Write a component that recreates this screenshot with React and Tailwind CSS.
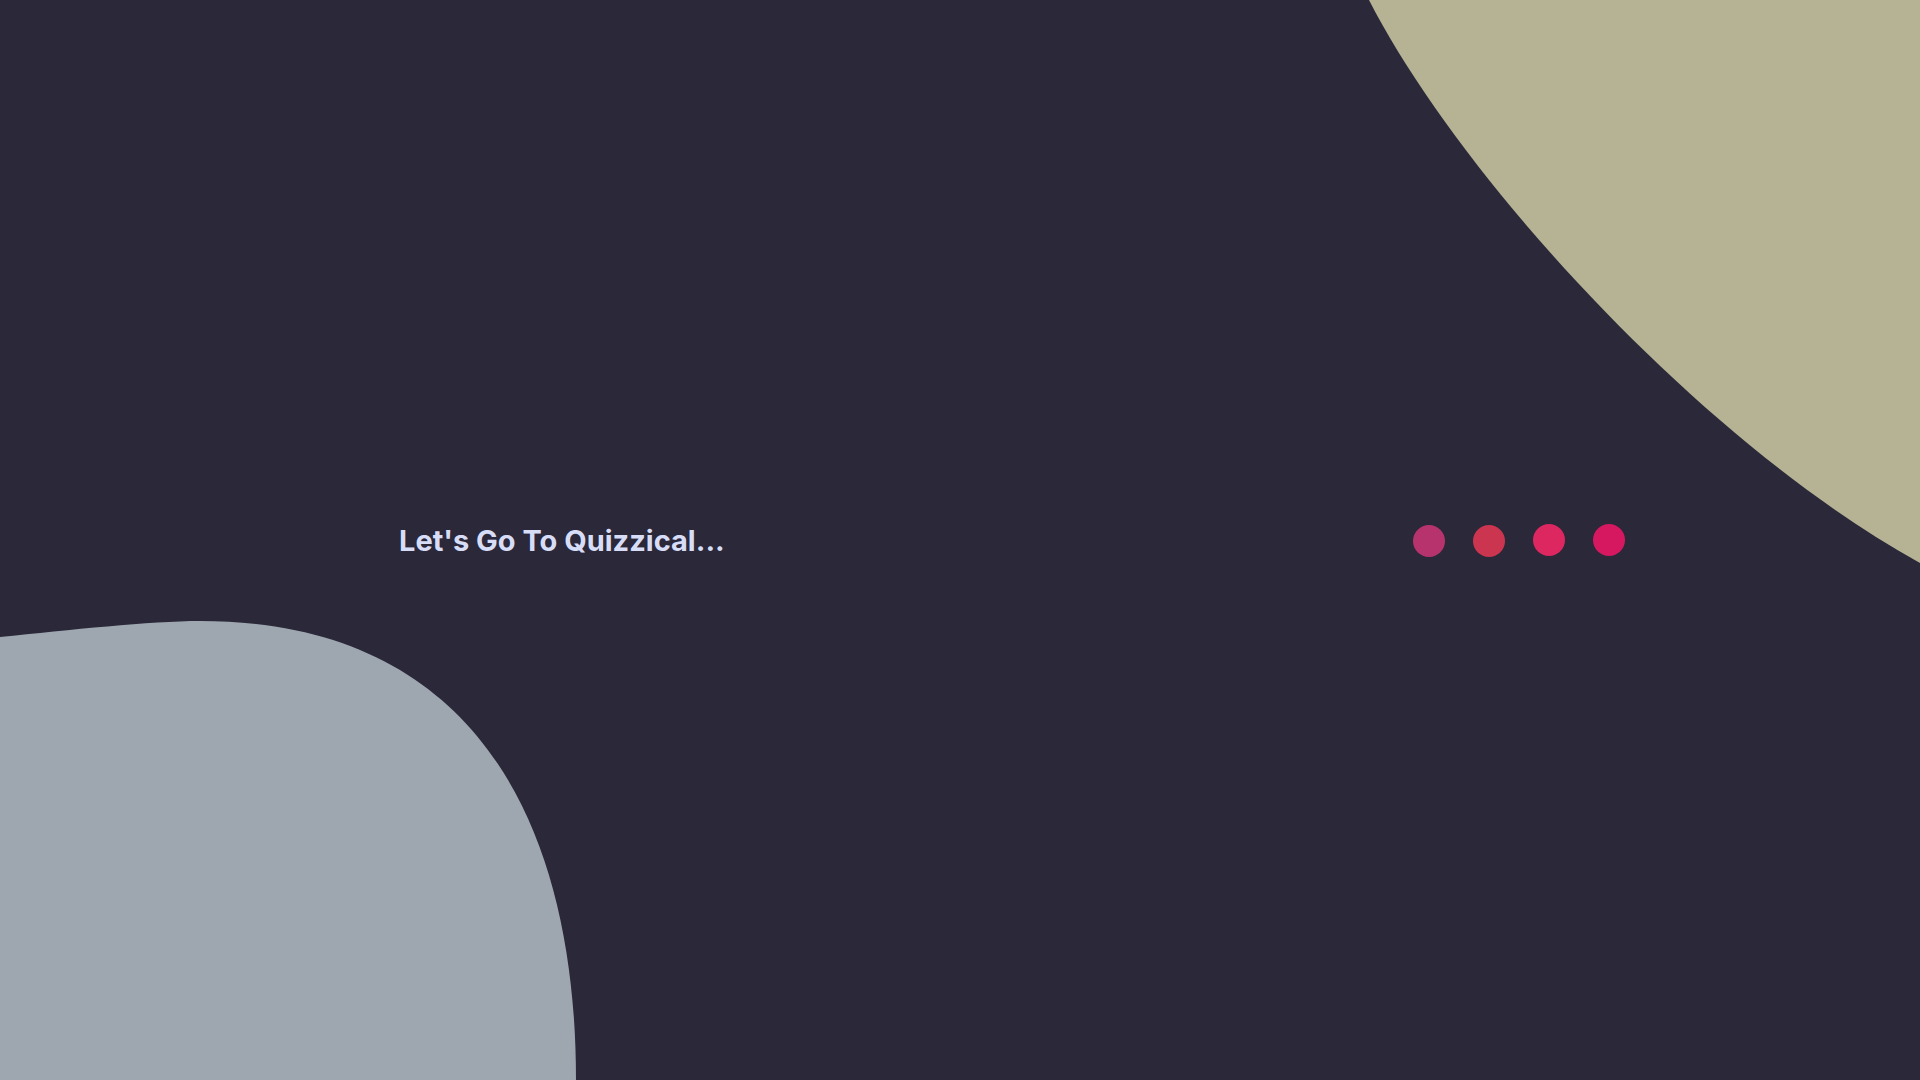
export default function App() {
  return (
    <div className="relative w-full h-[1080px] overflow-hidden bg-[#2a2839]">
      <svg
        className="absolute top-0 right-0"
        width="552"
        height="564"
        viewBox="0 0 552 564"
      >
        <path
          d="M1 0 C 92 178, 334.5 443, 552 563 L552 0 Z"
          fill="#b5b394"
        />
      </svg>
      <svg
        className="absolute left-0 bottom-0"
        width="580"
        height="460"
        viewBox="0 0 580 460"
      >
        <path
          d="M0 17 C 70 10, 150 1, 200 1 C 480 1, 576 210, 576 460 L0 460 Z"
          fill="#9ea6b0"
        />
      </svg>
      <div className="relative flex h-full items-center">
        <div className="ml-[399px] w-[1226px] flex items-center justify-between">
          <p
            className="text-[29px] font-bold text-[#d8ddf7] leading-none"
            style={{ fontFamily: "Inter, 'Liberation Sans', sans-serif" }}
          >
            Let's Go To Quizzical...
          </p>
          <div className="flex items-center gap-[28px]">
            <span className="block w-[32px] h-[32px] rounded-full bg-[#b7336e] mt-[2px]" />
            <span className="block w-[32px] h-[32px] rounded-full bg-[#cc3550] mt-[2px]" />
            <span className="block w-[32px] h-[32px] rounded-full bg-[#dd2760]" />
            <span className="block w-[32px] h-[32px] rounded-full bg-[#d5185f] mb-[1px]" />
          </div>
        </div>
      </div>
    </div>
  );
}
